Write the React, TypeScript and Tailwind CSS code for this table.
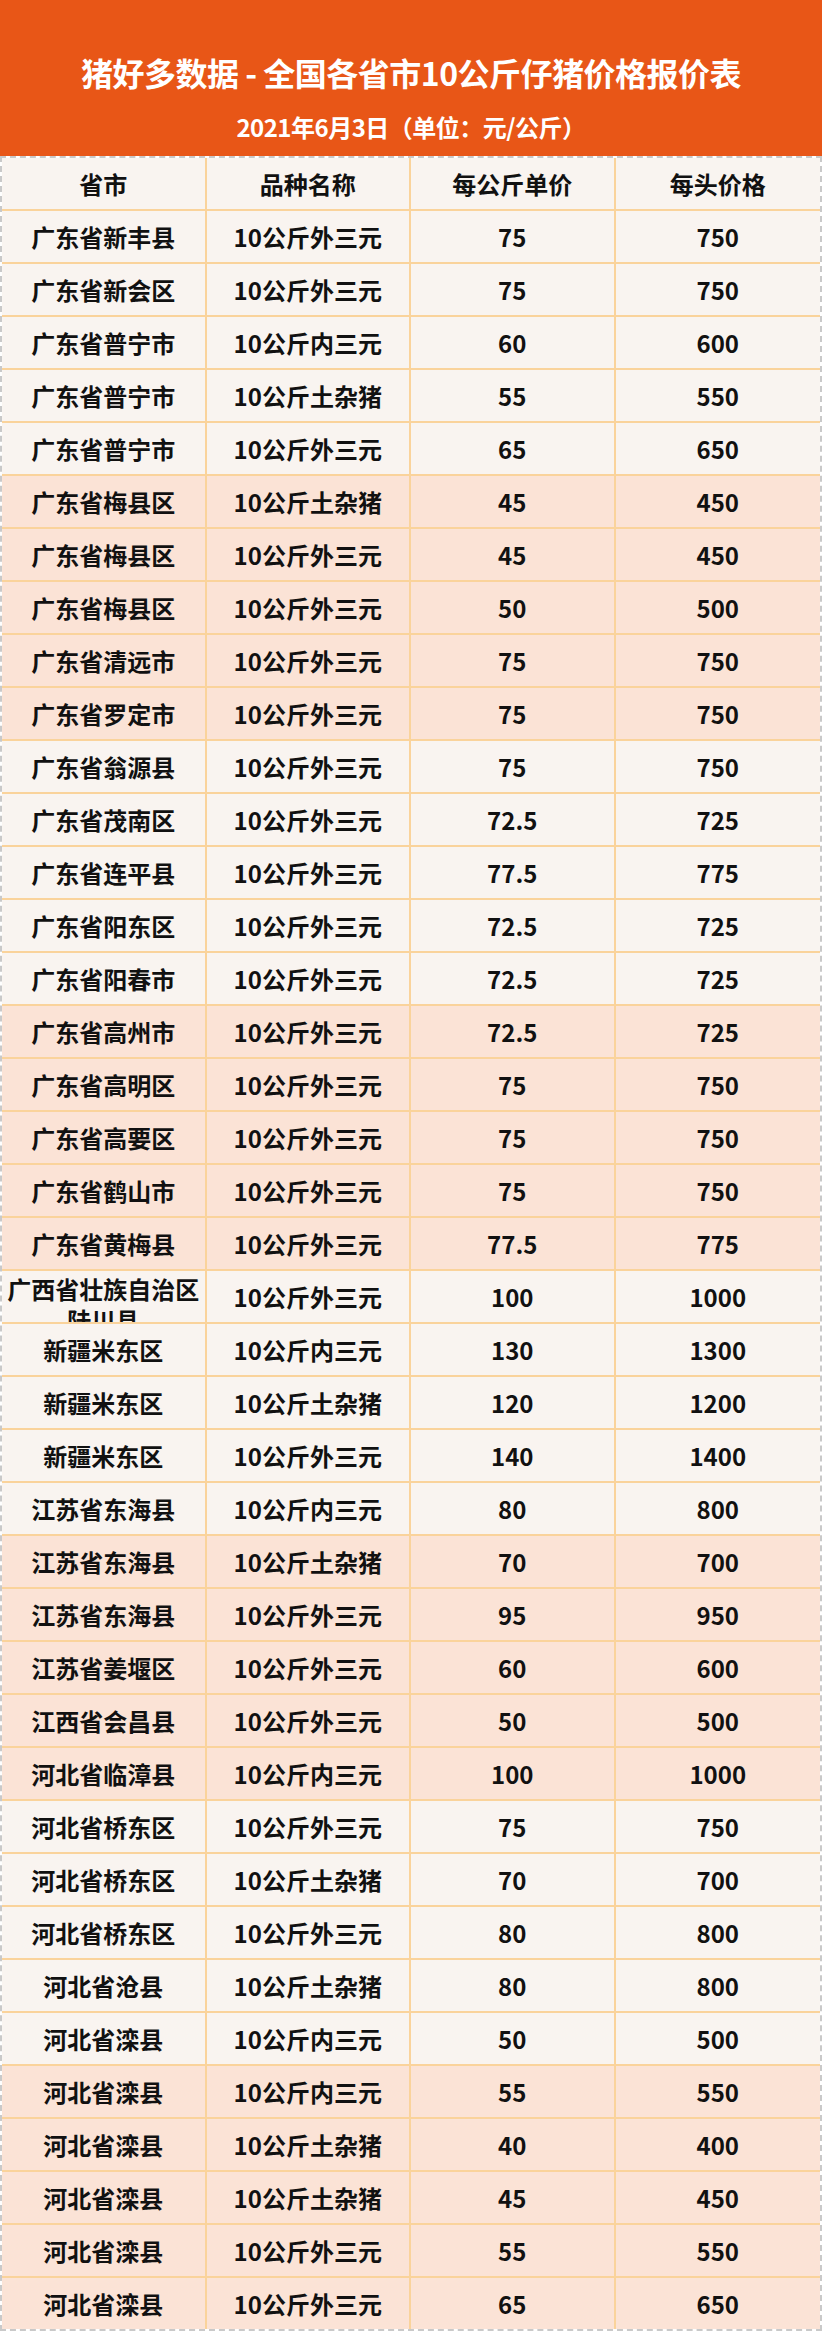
import React from "react"

type Row = {
    place: string
    kind: string
    unit: string
    head: string
}

const rows: Row[] = [
    { place: "广东省新丰县", kind: "10公斤外三元", unit: "75", head: "750" },
    { place: "广东省新会区", kind: "10公斤外三元", unit: "75", head: "750" },
    { place: "广东省普宁市", kind: "10公斤内三元", unit: "60", head: "600" },
    { place: "广东省普宁市", kind: "10公斤土杂猪", unit: "55", head: "550" },
    { place: "广东省普宁市", kind: "10公斤外三元", unit: "65", head: "650" },
    { place: "广东省梅县区", kind: "10公斤土杂猪", unit: "45", head: "450" },
    { place: "广东省梅县区", kind: "10公斤外三元", unit: "45", head: "450" },
    { place: "广东省梅县区", kind: "10公斤外三元", unit: "50", head: "500" },
    { place: "广东省清远市", kind: "10公斤外三元", unit: "75", head: "750" },
    { place: "广东省罗定市", kind: "10公斤外三元", unit: "75", head: "750" },
    { place: "广东省翁源县", kind: "10公斤外三元", unit: "75", head: "750" },
    { place: "广东省茂南区", kind: "10公斤外三元", unit: "72.5", head: "725" },
    { place: "广东省连平县", kind: "10公斤外三元", unit: "77.5", head: "775" },
    { place: "广东省阳东区", kind: "10公斤外三元", unit: "72.5", head: "725" },
    { place: "广东省阳春市", kind: "10公斤外三元", unit: "72.5", head: "725" },
    { place: "广东省高州市", kind: "10公斤外三元", unit: "72.5", head: "725" },
    { place: "广东省高明区", kind: "10公斤外三元", unit: "75", head: "750" },
    { place: "广东省高要区", kind: "10公斤外三元", unit: "75", head: "750" },
    { place: "广东省鹤山市", kind: "10公斤外三元", unit: "75", head: "750" },
    { place: "广东省黄梅县", kind: "10公斤外三元", unit: "77.5", head: "775" },
    { place: "广西省壮族自治区陆川县", kind: "10公斤外三元", unit: "100", head: "1000" },
    { place: "新疆米东区", kind: "10公斤内三元", unit: "130", head: "1300" },
    { place: "新疆米东区", kind: "10公斤土杂猪", unit: "120", head: "1200" },
    { place: "新疆米东区", kind: "10公斤外三元", unit: "140", head: "1400" },
    { place: "江苏省东海县", kind: "10公斤内三元", unit: "80", head: "800" },
    { place: "江苏省东海县", kind: "10公斤土杂猪", unit: "70", head: "700" },
    { place: "江苏省东海县", kind: "10公斤外三元", unit: "95", head: "950" },
    { place: "江苏省姜堰区", kind: "10公斤外三元", unit: "60", head: "600" },
    { place: "江西省会昌县", kind: "10公斤外三元", unit: "50", head: "500" },
    { place: "河北省临漳县", kind: "10公斤内三元", unit: "100", head: "1000" },
    { place: "河北省桥东区", kind: "10公斤外三元", unit: "75", head: "750" },
    { place: "河北省桥东区", kind: "10公斤土杂猪", unit: "70", head: "700" },
    { place: "河北省桥东区", kind: "10公斤外三元", unit: "80", head: "800" },
    { place: "河北省沧县", kind: "10公斤土杂猪", unit: "80", head: "800" },
    { place: "河北省滦县", kind: "10公斤内三元", unit: "50", head: "500" },
    { place: "河北省滦县", kind: "10公斤内三元", unit: "55", head: "550" },
    { place: "河北省滦县", kind: "10公斤土杂猪", unit: "40", head: "400" },
    { place: "河北省滦县", kind: "10公斤土杂猪", unit: "45", head: "450" },
    { place: "河北省滦县", kind: "10公斤外三元", unit: "55", head: "550" },
    { place: "河北省滦县", kind: "10公斤外三元", unit: "65", head: "650" },
]

function Cell({ children, last, wrap }: { children: React.ReactNode; last?: boolean; wrap?: boolean }) {
    return (
        <div
            className={
                "h-full overflow-hidden flex justify-center text-center " +
                (wrap ? "items-start pt-[2px] leading-[31px] " : "items-center leading-[31px] ") +
                (last ? "" : "border-r-2 border-[#FAD39B]")
            }
        >
            <span className="block">{children}</span>
        </div>
    )
}

export default function App() {
    return (
        <div className="w-[822px] font-['Noto_Sans_CJK_SC','Noto_Sans',sans-serif] font-bold text-[#111]">
            {/* Title */}
            <div className="h-[156px] bg-[#E85617] flex flex-col items-center text-white">
                <div className="pt-[50px] text-[32px] leading-[44px] tracking-[-0.5px]">
                    猪好多数据 - 全国各省市10公斤仔猪价格报价表
                </div>
                <div className="mt-[17px] text-[24px] leading-[32px] tracking-[-0.5px]">
                    2021年6月3日（单位：元/公斤）
                </div>
            </div>

            {/* Table */}
            <div className="border-2 border-dashed border-[#C9C9C9] text-[24px]">
                <div className="grid grid-cols-4 h-[53px] bg-[#F9F4F0] border-b-2 border-[#FAD39B]">
                    <Cell>省市</Cell>
                    <Cell>品种名称</Cell>
                    <Cell>每公斤单价</Cell>
                    <Cell last>每头价格</Cell>
                </div>

                {rows.map((r, i) => {
                    const pink = Math.floor(i / 5) % 2 === 1
                    const isLast = i === rows.length - 1
                    return (
                        <div
                            key={i}
                            className={
                                "grid grid-cols-4 " +
                                (isLast ? "h-[51px] " : "h-[53px] border-b-2 border-[#FAD39B] ") +
                                (pink ? "bg-[#FBE3D6]" : "bg-[#F9F4F0]")
                            }
                        >
                            <Cell wrap={r.place.length > 7}>{r.place}</Cell>
                            <Cell>{r.kind}</Cell>
                            <Cell>{r.unit}</Cell>
                            <Cell last>{r.head}</Cell>
                        </div>
                    )
                })}
            </div>
        </div>
    )
}
